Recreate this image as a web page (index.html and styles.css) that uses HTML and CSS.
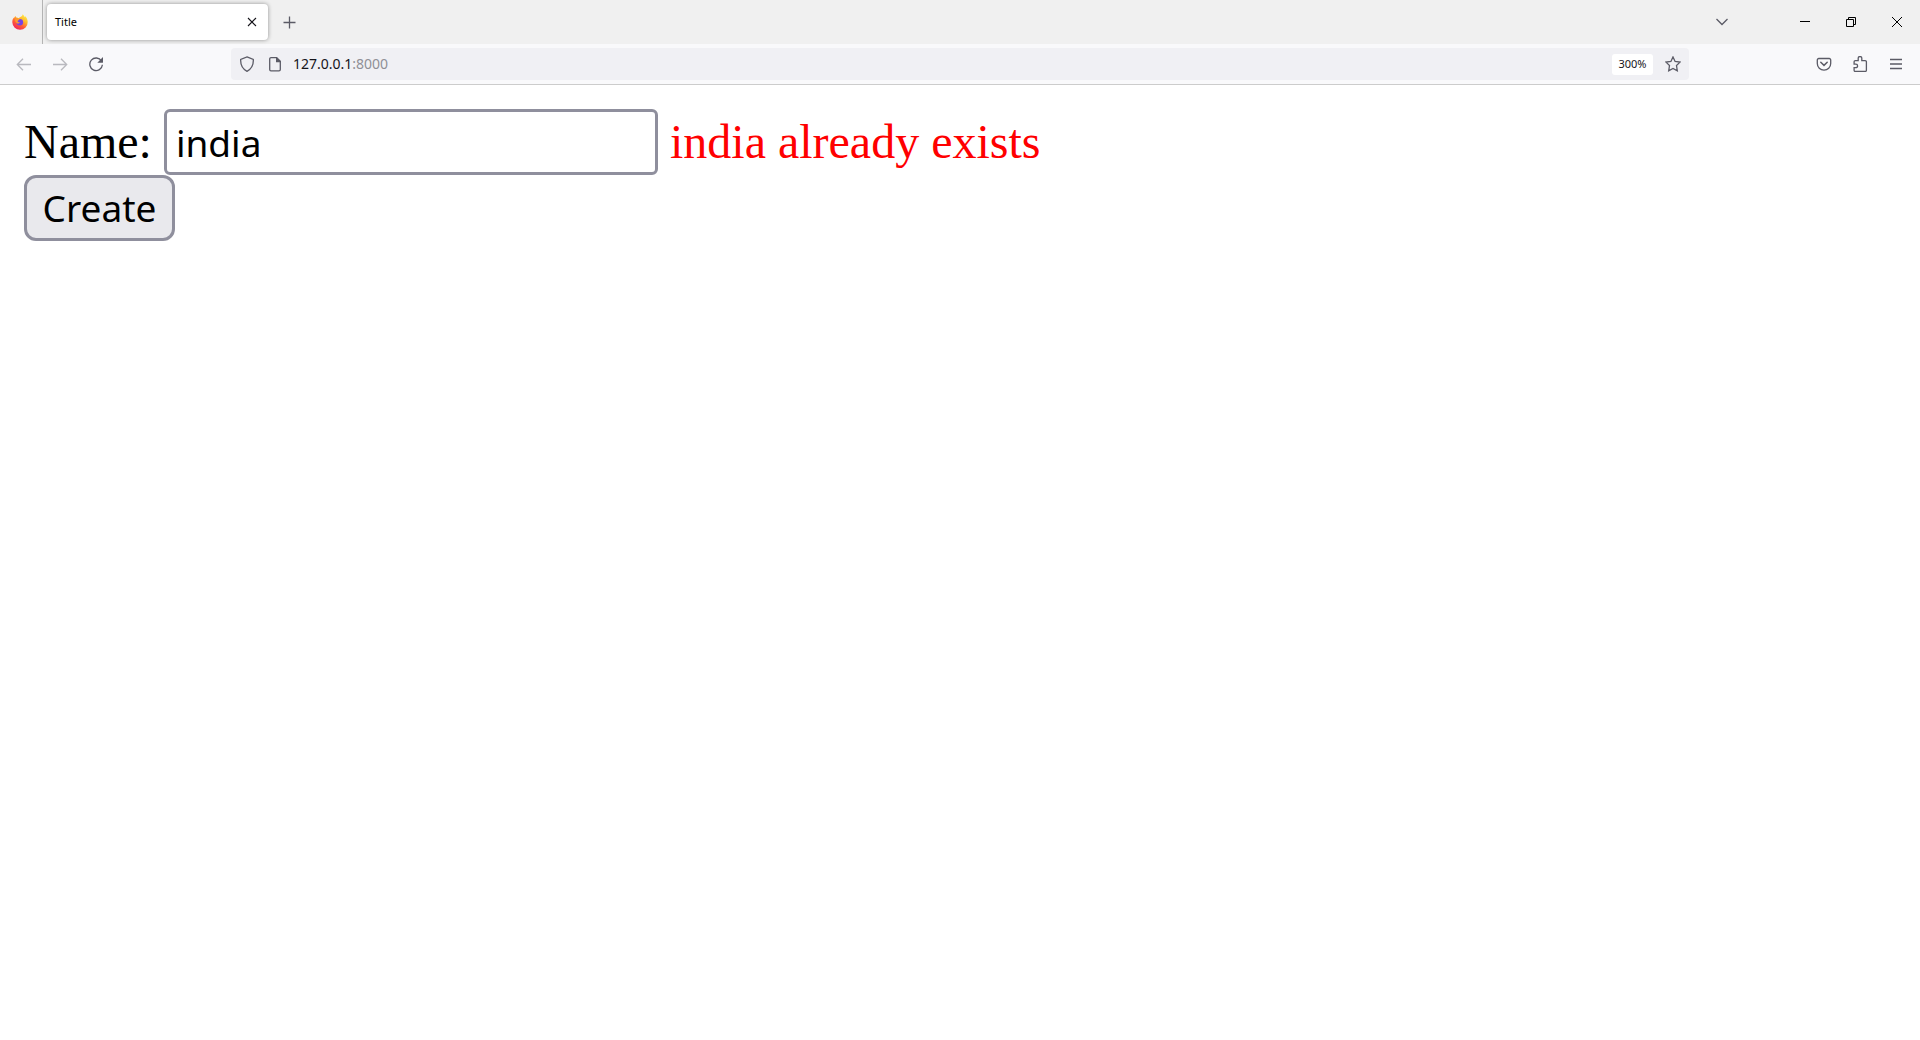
FILE: index.html
```html
<!DOCTYPE html>
<html lang="en">
<head>
<meta charset="utf-8">
<title>Title</title>
<link rel="stylesheet" href="styles.css">
</head>
<body>
<header class="browser">
  <div class="tab-strip">
    <button class="firefox-view" aria-label="Firefox View">
      <svg class="icon" viewBox="0 0 16 16">
        <defs>
          <linearGradient id="flame" x1="0.85" y1="0.05" x2="0.25" y2="1">
            <stop offset="0" stop-color="#fff04a"/>
            <stop offset="0.35" stop-color="#ffb52b"/>
            <stop offset="0.65" stop-color="#ff5a36"/>
            <stop offset="1" stop-color="#ee1c62"/>
          </linearGradient>
        </defs>
        <path fill="url(#flame)" d="M10.6 0.2c1.2 1 1.7 2 1.9 3 .5-.1.4-1 .3-1.3 1.700 1.200 2.900 3.600 2.900 6a7.700 7.700 0 0 1-15.400.4c0-2 .6-3.500 1.400-4.700l.1 1c.4-1.300 1.200-2.200 2-2.700 0 .8.200 1.300.6 1.700.9 0 1.700.2 2.400.6C8 2.800 10.500 2.500 10.600.2z"/>
        <circle cx="7.800" cy="8.300" r="3.300" fill="#7542e5"/>
        <path fill="#ff9a2b" d="M3.200 5.200c1.500-1 3.200-.8 4.300.1-.2 1-1.500 1.100-1.900 1.700.1 1.200 1.300 1.400 2.300 1.200-.5 1.400-2.100 1.600-3.300.7C3.400 8 2.900 6.500 3.200 5.200z"/>
      </svg>
    </button>
    <div class="tab">
      <span class="tab-title">Title</span>
      <button class="tab-close" aria-label="Close tab">
        <svg class="icon" viewBox="0 0 16 16"><path class="dark" d="M4 4l8 8M12 4l-8 8"/></svg>
      </button>
    </div>
    <button class="new-tab" aria-label="New tab">
      <svg class="icon" viewBox="0 0 16 16"><path d="M8.500 2.500v12M2.500 8.500h12"/></svg>
    </button>
    <div class="window-controls">
      <button class="window-button list-tabs" aria-label="List all tabs">
        <svg class="icon" viewBox="0 0 16 16"><path d="M2.500 5l5.500 5.500L13.500 5"/></svg>
      </button>
      <button class="window-button" aria-label="Minimize">
        <svg class="glyph" viewBox="0 0 10 10"><path d="M0 4.500h10"/></svg>
      </button>
      <button class="window-button" aria-label="Restore">
        <svg class="glyph" viewBox="0 0 10 10"><path d="M.5 2.500h7v7h-7zM2.500 2.500v-2h7v7h-2"/></svg>
      </button>
      <button class="window-button" aria-label="Close">
        <svg class="glyph" viewBox="0 0 10 10"><path d="M0 0l10 10M10 0L0 10"/></svg>
      </button>
    </div>
  </div>
  <div class="toolbar">
    <nav class="navigation">
      <button class="tool" aria-label="Back" disabled>
        <svg class="icon" viewBox="0 0 16 16"><path d="M15 8.500H1.700M7 2.800L1.300 8.500 7 14.200"/></svg>
      </button>
      <button class="tool" aria-label="Forward" disabled>
        <svg class="icon" viewBox="0 0 16 16"><path d="M1 8.500h13.300M9 2.800l5.700 5.700L9 14.200"/></svg>
      </button>
      <button class="tool" aria-label="Reload">
        <svg class="icon" viewBox="0 0 16 16"><path d="M13.500 5A6.300 6.300 0 1 0 14.400 8.800"/><path class="solid" d="M15 1v5.300a.5.500 0 0 1-.5.500H9.300z"/></svg>
      </button>
    </nav>
    <div class="address-bar">
      <svg class="icon" viewBox="0 0 16 16"><path d="M8 .9l6.300 2.500c.3 4.800-1.600 9.500-6.300 11.900C3.300 12.900 1.400 8.200 1.700 3.400z"/></svg>
      <svg class="icon page-icon" viewBox="0 0 16 16"><path d="M9.500 1.700H4a1.300 1.300 0 0 0-1.300 1.300v10.500A1.300 1.300 0 0 0 4 14.800h8a1.300 1.300 0 0 0 1.300-1.300V5.500z"/><path class="solid" d="M9 1.200h1L13.800 5v1.300H9z"/></svg>
      <span class="address">127.0.0.1<span class="port">:8000</span></span>
      <button class="zoom-level">300%</button>
      <button class="bookmark" aria-label="Bookmark this page">
        <svg class="icon" viewBox="0 0 16 16"><path d="M8 .9l2.100 4.500 4.900.7-3.500 3.500.8 5.200L8 12.400l-4.300 2.400.8-5.200L1 6.100l4.900-.7z"/></svg>
      </button>
    </div>
    <div class="actions">
      <button class="tool" aria-label="Save to Pocket">
        <svg class="icon" viewBox="0 0 16 16"><path d="M2.800 2.500h10.400a1.500 1.500 0 0 1 1.500 1.500v3.500a6.700 6.700 0 0 1-13.400 0V4a1.500 1.500 0 0 1 1.500-1.500z"/><path class="round" d="M4.800 6.300L8 9.400l3.200-3.100"/></svg>
      </button>
      <button class="tool" aria-label="Extensions">
        <svg class="icon" viewBox="0 0 16 16"><path d="M6.200 4.600V2.300a1.800 1.800 0 0 1 3.600 0v2.300h3.400a1.200 1.200 0 0 1 1.200 1.200v8.500a1.200 1.200 0 0 1-1.200 1.200H3.300a1.200 1.200 0 0 1-1.200-1.200v-2.600h1.700a1.700 1.700 0 0 0 0-3.600H2.100V5.800a1.200 1.200 0 0 1 1.200-1.200z"/></svg>
      </button>
      <button class="tool" aria-label="Open application menu">
        <svg class="icon" viewBox="0 0 16 16"><path d="M2 3.500h12M2 8h12M2 12.500h12"/></svg>
      </button>
    </div>
  </div>
</header>
<main class="page">
  <form class="form">
    <div class="field">
      <label for="name">Name:</label>
      <input class="name-input" id="name" type="text" value="india">
      <span class="error">india already exists</span>
    </div>
    <button class="create" type="button">Create</button>
  </form>
</main>
</body>
</html>
```
FILE: styles.css
```css
* {
  box-sizing: border-box;
}

body {
  margin: 0;
  background: #fff;
  color: #000;
}

button {
  padding: 0;
  border: 0;
  background: none;
  color: inherit;
  font: inherit;
}

svg {
  display: block;
  flex: none;
  fill: none;
  stroke: #5b5b66;
  stroke-width: 1.3;
}

.icon {
  width: 16px;
  height: 16px;
}

.glyph {
  width: 10px;
  height: 10px;
  stroke: #000;
  stroke-width: 1;
}

.solid {
  fill: #5b5b66;
  stroke: none;
}

.dark {
  stroke: #15141a;
  stroke-width: 1.1;
}

.round {
  stroke-width: 1.5;
  stroke-linecap: round;
}

.browser {
  font: 11px/16px "Segoe UI", "Noto Sans", "Open Sans", sans-serif;
  border-bottom: 1px solid #ccc;
}

.tab-strip {
  display: flex;
  align-items: center;
  height: 44px;
  background: #f0f0f0;
}

.firefox-view {
  width: 43px;
  height: 44px;
  padding-left: 12px;
  border-right: 1px solid #b4b4b4;
}

.firefox-view .icon {
  stroke: none;
}

.tab {
  display: flex;
  align-items: center;
  justify-content: space-between;
  width: 221px;
  height: 36px;
  margin-left: 4px;
  padding: 0 8px;
  border-radius: 4px;
  background: #fff;
  box-shadow: 0 0 4px rgba(0, 0, 0, 0.4);
}

.new-tab {
  margin-left: 13px;
}

.window-controls {
  display: flex;
  align-items: center;
  margin-left: auto;
}

.window-button {
  display: flex;
  align-items: center;
  justify-content: center;
  width: 46px;
  height: 44px;
}

.list-tabs {
  margin-right: 37px;
}

.toolbar {
  display: flex;
  align-items: center;
  justify-content: space-between;
  height: 40px;
  padding: 0 6px;
  background: #f9f9fb;
}

.navigation,
.actions {
  display: flex;
  width: 225px;
}

.actions {
  justify-content: flex-end;
}

.tool {
  display: flex;
  align-items: center;
  justify-content: center;
  width: 36px;
  height: 32px;
}

.tool:disabled {
  opacity: 0.4;
}

.address-bar {
  display: flex;
  align-items: center;
  flex: 1;
  height: 32px;
  padding: 0 8px;
  border-radius: 4px;
  background: #f0f0f4;
}

.page-icon {
  margin: 0 10px 0 12px;
}

.address {
  flex: 1;
  color: #15141a;
  font-size: 14px;
  line-height: 20px;
}

.port {
  color: #8f8f96;
}

.zoom-level {
  width: 41px;
  height: 21px;
  margin-right: 12px;
  border-radius: 3px;
  background: #fff;
  color: #15141a;
}

.page {
  padding: 24px;
  font: 48px/66px "Liberation Serif", "Times New Roman", serif;
}

.field {
  display: flex;
  align-items: center;
  gap: 12px;
}

.name-input,
.create {
  height: 66px;
  border: 3px solid #8f8f9d;
  color: #000;
  font: 37px/54px Tahoma, "Noto Sans", "Open Sans", sans-serif;
}

.name-input {
  width: 494px;
  padding: 3px 9px;
  border-radius: 6px;
  background: #fff;
}

.error {
  color: #f00;
}

.create {
  display: block;
  width: 151px;
  border-radius: 12px;
  background: #e9e9ed;
}
```
